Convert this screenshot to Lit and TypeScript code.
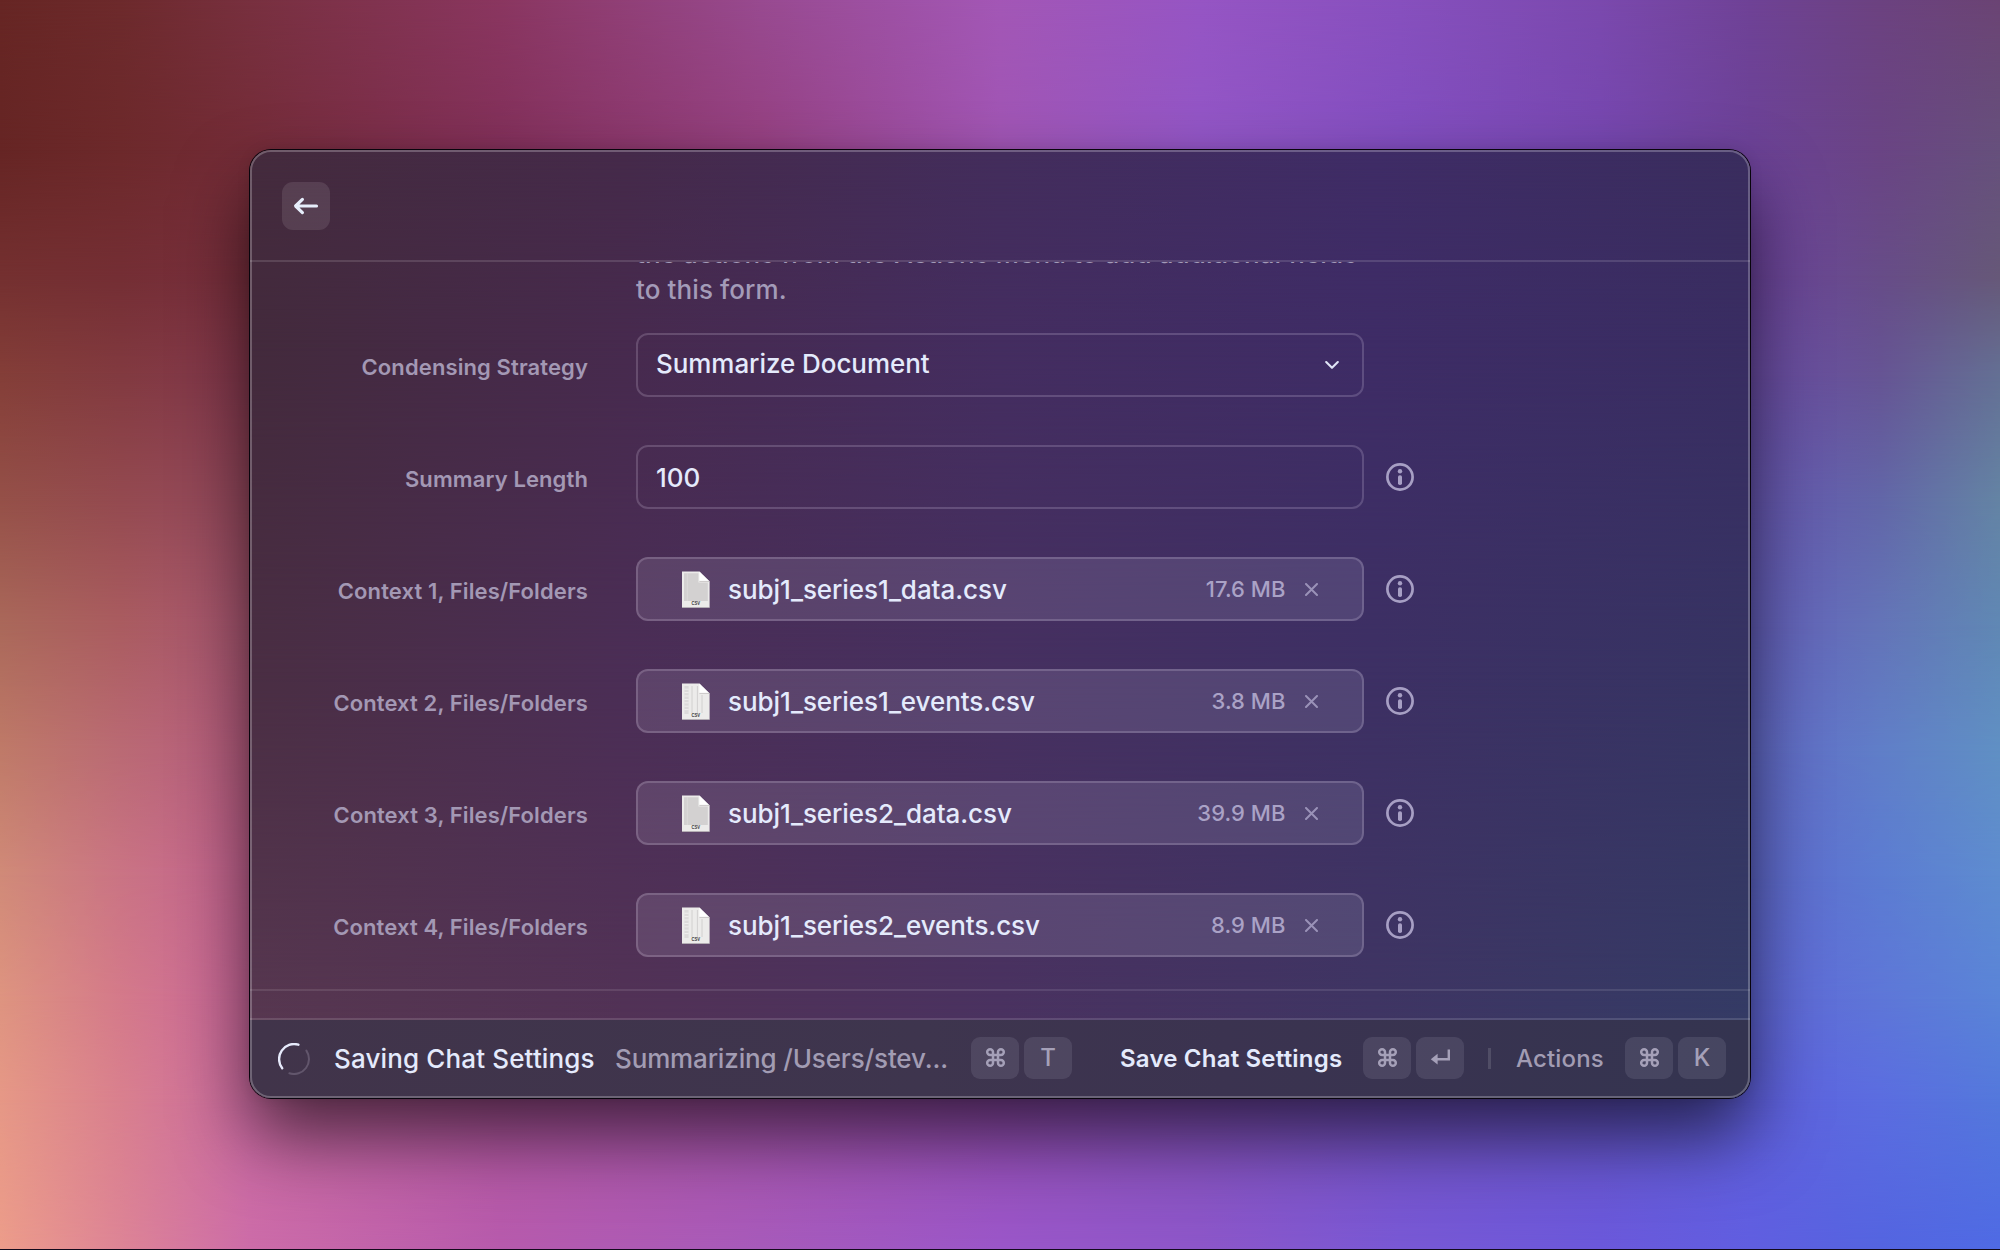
import { LitElement, html, css, svg } from "lit";
import { customElement, property } from "lit/decorators.js";

interface MeshRow {
  at: number;
  colors: string[];
}

/* Smooth two-dimensional gradient: stacked horizontal gradients, each faded in vertically. */
@customElement("color-mesh")
class ColorMesh extends LitElement {
  @property({ attribute: false }) columns: number[] = [];
  @property({ attribute: false }) rows: MeshRow[] = [];

  static styles = css`
    :host {
      display: grid;
      overflow: hidden;
    }
    .band {
      grid-area: 1 / 1;
    }
  `;

  render() {
    return this.rows.map((row, i) => {
      const stops = row.colors.map((c, j) => `${c} ${this.columns[j]}%`).join(", ");
      const mask =
        i === 0
          ? "none"
          : `linear-gradient(to bottom, transparent ${this.rows[i - 1].at}%, #000 ${row.at}%)`;
      return html`<div
        class="band"
        style="background:linear-gradient(to right, ${stops});-webkit-mask-image:${mask};mask-image:${mask}"
      ></div>`;
    });
  }
}

const WALL_COLUMNS = [0, 6, 12.5, 25, 38, 50, 60, 70, 80, 87.5, 94, 100];
const WALL_ROWS: MeshRow[] = [
  { at: 0, colors: ["#672624", "#6d2a2c", "#78303f", "#8a3660", "#984a90", "#a357b6", "#9655c4", "#8750be", "#7b49ae", "#6f4296", "#6c4280", "#6b4474"] },
  { at: 12, colors: ["#662524", "#6d292b", "#742c38", "#82305a", "#954080", "#a055b4", "#9256c6", "#824ec0", "#7647b0", "#6c4297", "#6a4484", "#66507c"] },
  { at: 22, colors: ["#743030", "#742e34", "#782f3e", "#82305a", "#954080", "#a055b4", "#9256c6", "#824ec0", "#7647b0", "#6c449c", "#674c88", "#665878"] },
  { at: 30, colors: ["#843e38", "#823a40", "#84384e", "#82305a", "#954080", "#a055b4", "#9256c6", "#824ec0", "#7649b4", "#6a4ca4", "#665494", "#647094"] },
  { at: 40, colors: ["#955048", "#944a50", "#94485e", "#94406a", "#9a4488", "#a055b4", "#9056c4", "#804ec0", "#7050b8", "#6656b0", "#6266a8", "#6484a4"] },
  { at: 50, colors: ["#aa685a", "#aa5c60", "#a85672", "#a44c78", "#a04a90", "#a055b4", "#8c54c0", "#7c52c0", "#6c54bc", "#645eba", "#6474b8", "#6088b4"] },
  { at: 60, colors: ["#bf7a68", "#ba6a74", "#b65c80", "#a84e80", "#a24c96", "#9c52b4", "#8853be", "#7852c0", "#6854be", "#6268c6", "#607ec8", "#6090c4"] },
  { at: 70, colors: ["#d08a78", "#ca7484", "#c26290", "#b05490", "#a44e9c", "#9850b4", "#8652bc", "#7452c0", "#6458c0", "#6068cc", "#5c7cd2", "#5e8cd0"] },
  { at: 80, colors: ["#de9480", "#d47a8a", "#c8669a", "#b4589c", "#a850a4", "#984fb4", "#8551bc", "#7351c2", "#6458c6", "#6066d6", "#5e76d8", "#5a84d8"] },
  { at: 88, colors: ["#e69886", "#d9808e", "#ca6aa0", "#b85aa4", "#aa55ae", "#984fb6", "#8552be", "#7453c8", "#6858d0", "#6060de", "#5b6de0", "#5478dc"] },
  { at: 100, colors: ["#ec9c8a", "#dd8496", "#cc6ca8", "#b65aac", "#a65aba", "#9a56c8", "#8c56c8", "#7858d4", "#6b58da", "#605ee0", "#5464e0", "#4f6ae4"] },
];

const PANEL_COLUMNS = [0, 25, 50, 75, 100];
const PANEL_ROWS: MeshRow[] = [
  { at: 0, colors: ["#442b3d", "#452a4a", "#432d5c", "#3f2c66", "#3a2d5e"] },
  { at: 20, colors: ["#432a3c", "#472a4e", "#442d60", "#3e2c66", "#392d62"] },
  { at: 55, colors: ["#4a2e43", "#4b2e56", "#463060", "#3d3064", "#363463"] },
  { at: 92, colors: ["#573750", "#523256", "#4a3260", "#3f3563", "#343b65"] },
  { at: 100, colors: ["#573750", "#523256", "#4a3260", "#3f3563", "#343b65"] },
];

const commandGlyph = svg`
  <path d="M7 7V4.1A2.9 2.9 0 1 0 4.1 7H14.9A2.9 2.9 0 1 0 12 4.1V14.9A2.9 2.9 0 1 0 14.9 12H4.1A2.9 2.9 0 1 0 7 14.9Z"
    fill="none" stroke="currentColor" stroke-width="2.5"/>`;

@customElement("key-cap")
class KeyCap extends LitElement {
  @property() key = "";

  static styles = css`
    :host {
      display: block;
    }
    .cap {
      display: flex;
      align-items: center;
      justify-content: center;
      width: 48px;
      height: 42px;
      border-radius: 9px;
      background: rgba(235, 240, 255, 0.1);
      color: #a5a0b8;
      font-size: 24px;
      font-weight: 450;
      line-height: 42px;
    }
    .glyph {
      display: block;
      overflow: visible;
      margin-bottom: 1px;
    }
  `;

  private face() {
    if (this.key === "cmd")
      return html`<svg class="glyph" width="19" height="19" viewBox="0 0 19 19">${commandGlyph}</svg>`;
    if (this.key === "return")
      return html`<svg class="glyph" width="20" height="19" viewBox="0 0 20 19">
        <path d="M18.8 1.4V11.2H5" fill="none" stroke="currentColor" stroke-width="2.4"/>
        <path d="M7.6 5.8V16.6L0.8 11.2Z" fill="currentColor"/>
      </svg>`;
    return this.key;
  }

  render() {
    return html`<div class="cap">${this.face()}</div>`;
  }
}

@customElement("info-mark")
class InfoMark extends LitElement {
  static styles = css`
    :host {
      display: block;
      width: 28px;
      height: 28px;
      color: #a79fc4;
    }
    .mark {
      display: block;
    }
  `;
  render() {
    return html`<svg class="mark" width="28" height="28" viewBox="0 0 28 28">
      <circle cx="14" cy="14" r="12.6" fill="none" stroke="currentColor" stroke-width="2.7"/>
      <circle cx="14" cy="8.2" r="2.2" fill="currentColor"/>
      <rect x="12" y="12.2" width="4" height="9.8" rx="1.8" fill="currentColor"/>
    </svg>`;
  }
}

@customElement("file-icon")
class FileIcon extends LitElement {
  @property() kind: "data" | "events" = "data";

  static styles = css`
    :host {
      display: block;
      width: 28px;
      height: 37px;
    }
    .sheet {
      display: block;
    }
    .tag {
      font: 700 5px "Liberation Sans", Arial, sans-serif;
    }
  `;

  render() {
    const dense = this.kind === "data";
    return html`<svg class="sheet" width="28" height="37" viewBox="0 0 28 37">
      <path d="M0 0.4H17.4L27.6 10.4V36.6H0Z" fill="#ecebea"/>
      ${dense
        ? svg`<path d="M2 2.2H16.4V11.4H25.8V30H2Z" fill="#d3d1d1"/>
            <path d="M5.3 2V30" stroke="#dedcdc" stroke-width="0.8"/>`
        : svg`<path d="M2.4 3H6.6V31H2.4Z" fill="#dcdada"/>
            <path d="M2.4 6.2H6.6M2.4 9.6H6.6M2.4 13H6.6M2.4 16.4H6.6M2.4 19.8H6.6M2.4 23.2H6.6M2.4 26.6H6.6" stroke="#f2f1f1" stroke-width="0.9"/>
            <path d="M10 3V30M15.4 3V30M20 12V30" stroke="#cfcdcd" stroke-width="0.9"/>`}
      <path d="M17.4 0.4V10.4H27.6Z" fill="#ffffff"/>
      <path d="M17.4 10.4H27.6" stroke="#bdbaba" stroke-width="0.8"/>
      <path d="M0 36.6H27.6" stroke="#b9b5b8" stroke-width="0.8"/>
      <text class="tag" x="13.8" y="33.8" text-anchor="middle" textLength="8.5" lengthAdjust="spacingAndGlyphs" fill="#3c3940">CSV</text>
    </svg>`;
  }
}

interface FileRow {
  label: string;
  name: string;
  size: string;
  kind: "data" | "events";
}

const FILES: FileRow[] = [
  { label: "Context 1, Files/Folders", name: "subj1_series1_data.csv", size: "17.6 MB", kind: "data" },
  { label: "Context 2, Files/Folders", name: "subj1_series1_events.csv", size: "3.8 MB", kind: "events" },
  { label: "Context 3, Files/Folders", name: "subj1_series2_data.csv", size: "39.9 MB", kind: "data" },
  { label: "Context 4, Files/Folders", name: "subj1_series2_events.csv", size: "8.9 MB", kind: "events" },
];

@customElement("app-root")
class AppRoot extends LitElement {
  static styles = css`
    :host {
      display: block;
      font-family: Inter, "Liberation Sans", sans-serif;
      font-weight: 450;
      color: #e4eafc;
    }
    .desktop {
      display: grid;
      box-sizing: border-box;
      width: 2000px;
      height: 1250px;
      overflow: hidden;
      border-bottom: 1px solid #120a1c;
    }
    .wall,
    .stage {
      grid-area: 1 / 1;
    }
    .stage {
      padding: 150px 250px 0;
      z-index: 1;
    }
    .window {
      display: grid;
      width: 1500px;
      height: 948px;
      border-radius: 21px;
      box-shadow: 0 0 0 1px #08040c, 0 38px 72px 0 rgba(0, 0, 0, 0.62), 0 0 14px rgba(0, 0, 0, 0.1);
    }
    .tint,
    .content,
    .frame {
      grid-area: 1 / 1;
      border-radius: 21px;
      min-width: 0;
      min-height: 0;
    }
    .frame {
      z-index: 2;
      border: 2px solid rgba(255, 255, 255, 0.24);
      pointer-events: none;
    }
    .content {
      z-index: 1;
      display: flex;
      flex-direction: column;
      overflow: hidden;
    }
    .header {
      flex: none;
      box-sizing: border-box;
      height: 112px;
      padding: 32px 32px 0;
      border-bottom: 2px solid rgba(255, 255, 255, 0.13);
    }
    .back {
      display: grid;
      place-items: center;
      width: 48px;
      height: 48px;
      border-radius: 11px;
      background: rgba(255, 255, 255, 0.1);
    }
    .form {
      flex: none;
      display: flex;
      flex-direction: column;
      justify-content: flex-end;
      box-sizing: border-box;
      height: 727px;
      overflow: hidden;
      padding-bottom: 32px;
      gap: 48px;
    }
    .note {
      margin: 0 0 -23px 386px;
      width: 760px;
      font-size: 26px;
      line-height: 36px;
      letter-spacing: 0.1px;
      color: #a39bb8;
    }
    .row {
      display: grid;
      grid-template-columns: 338px 728px 28px;
      column-gap: 48px;
      align-items: center;
      height: 64px;
      flex: none;
    }
    .row info-mark {
      margin-left: -26px;
    }
    .label {
      text-align: right;
      font-size: 22px;
      font-weight: 600;
      line-height: 30px;
      padding-top: 4px;
      letter-spacing: 0.11px;
      color: #a398b4;
      white-space: nowrap;
    }
    .field {
      box-sizing: border-box;
      display: flex;
      align-items: center;
      height: 64px;
      border: 2px solid rgba(245, 235, 255, 0.18);
      border-radius: 12px;
      font-size: 26px;
      letter-spacing: -0.06px;
      padding: 0 24px 0 18px;
    }
    .choice {
      justify-content: space-between;
      padding-right: 23px;
      padding-bottom: 3px;
    }
    .chevron {
      margin-top: 3px;
    }
    .file {
      background: rgba(240, 240, 255, 0.115);
      padding: 0 44.5px 0 44px;
    }
    .name {
      flex: 1;
      margin-left: 18px;
    }
    .size {
      font-size: 22px;
      font-weight: 500;
      letter-spacing: 0.05px;
      color: #aaa2c6;
      margin-right: 19px;
    }
    .ruler {
      flex: none;
      height: 27px;
      border-top: 2px solid rgba(255, 255, 255, 0.1);
    }
    .footer {
      flex: 1;
      display: flex;
      align-items: center;
      box-sizing: border-box;
      border-top: 2px solid rgba(255, 255, 255, 0.13);
      background: linear-gradient(to right, #41344a, #3e354e 45%, #3b3350 65%, #343450);
      background-clip: padding-box;
      padding: 0 22px 2px 28px;
      white-space: nowrap;
      color: #a29cb3;
    }
    .spinner {
      flex: none;
      margin: 1px 24px 0 0;
    }
    .status {
      font-size: 26px;
      letter-spacing: 0.14px;
      color: #e4eafc;
      width: 281px;
    }
    .detail {
      font-size: 26px;
      letter-spacing: -0.15px;
      width: 356px;
    }
    .keys {
      display: flex;
      gap: 5px;
    }
    .action {
      font-size: 24px;
      font-weight: 550;
      letter-spacing: 0.15px;
    }
    .primary {
      font-weight: 600;
      letter-spacing: 0.2px;
      color: #e4eafc;
      width: 243px;
      margin-left: 48px;
    }
    .divider {
      width: 3px;
      height: 21px;
      margin: 0 25px 0 24px;
      background: rgba(255, 255, 255, 0.13);
    }
    .secondary {
      width: 109px;
    }
  `;

  render() {
    return html`
      <div class="desktop">
        <color-mesh class="wall" .columns=${WALL_COLUMNS} .rows=${WALL_ROWS}></color-mesh>
        <div class="stage">
          <div class="window">
            <color-mesh class="tint" .columns=${PANEL_COLUMNS} .rows=${PANEL_ROWS}></color-mesh>
            <div class="content">
              <div class="header">
                <div class="back">
                  <svg width="26" height="18" viewBox="0 0 26 18">
                    <path d="M23.5 9H3M9.4 2.4L2.6 9L9.4 15.6" fill="none" stroke="#e6eefb" stroke-width="3.2" stroke-linecap="round" stroke-linejoin="round"/>
                  </svg>
                </div>
              </div>
              <div class="form">
                <p class="note">the actions from the Actions menu to add additional fields<br />to this form.</p>
                <div class="row">
                  <div class="label">Condensing Strategy</div>
                  <div class="field choice">
                    <span>Summarize Document</span>
                    <svg class="chevron" width="14" height="10" viewBox="0 0 14 10">
                      <path d="M1.2 2L7 7.8L12.8 2" fill="none" stroke="#e0e4f6" stroke-width="2.1" stroke-linecap="round" stroke-linejoin="round"/>
                    </svg>
                  </div>
                </div>
                <div class="row">
                  <div class="label">Summary Length</div>
                  <div class="field"><span>100</span></div>
                  <info-mark></info-mark>
                </div>
                ${FILES.map(
                  (f) => html`<div class="row">
                    <div class="label">${f.label}</div>
                    <div class="field file">
                      <file-icon .kind=${f.kind}></file-icon>
                      <span class="name">${f.name}</span>
                      <span class="size">${f.size}</span>
                      <svg width="13" height="13" viewBox="0 0 13 13">
                        <path d="M1 1L12 12M12 1L1 12" fill="none" stroke="#9a92b8" stroke-width="2" stroke-linecap="round"/>
                      </svg>
                    </div>
                    <info-mark></info-mark>
                  </div>`
                )}
              </div>
              <div class="ruler"></div>
              <div class="footer">
                <svg class="spinner" width="32" height="32" viewBox="0 0 32 32">
                  <path d="M20.4 1.7A15 15 0 0 0 4.2 25.2" fill="none" stroke="#e6eafb" stroke-width="2.4" stroke-linecap="round"/>
                  <path d="M28.4 7.6A15 15 0 0 1 11.4 30.3" fill="none" stroke="#62566c" stroke-width="2" stroke-linecap="round"/>
                </svg>
                <span class="status">Saving Chat Settings</span>
                <span class="detail">Summarizing /Users/stev...</span>
                <div class="keys"><key-cap key="cmd"></key-cap><key-cap key="T"></key-cap></div>
                <span class="action primary">Save Chat Settings</span>
                <div class="keys"><key-cap key="cmd"></key-cap><key-cap key="return"></key-cap></div>
                <span class="divider"></span>
                <span class="action secondary">Actions</span>
                <div class="keys"><key-cap key="cmd"></key-cap><key-cap key="K"></key-cap></div>
              </div>
            </div>
            <div class="frame"></div>
          </div>
        </div>
      </div>
    `;
  }
}
